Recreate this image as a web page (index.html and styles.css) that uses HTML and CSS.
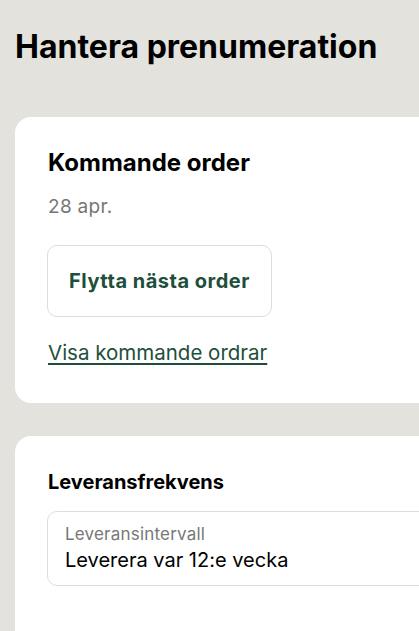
FILE: index.html
```html
<!DOCTYPE html>
<html lang="sv">
<head>
<meta charset="utf-8">
<title>Hantera prenumeration</title>
<link rel="stylesheet" href="styles.css">
</head>
<body>
<main class="page">
  <h1 class="page-title">Hantera prenumeration</h1>
  <section class="card">
    <h2 class="card-title">Kommande order</h2>
    <p class="date">28 apr.</p>
    <button class="btn-outline" type="button">Flytta nästa order</button>
    <a class="link" href="#">Visa kommande ordrar</a>
  </section>
  <section class="card card-freq">
    <h3 class="sub-title">Leveransfrekvens</h3>
    <div class="field">
      <span class="field-label">Leveransintervall</span>
      <span class="field-value">Leverera var 12:e vecka</span>
    </div>
  </section>
</main>
</body>
</html>
```

FILE: styles.css
```css
html, body {
  margin: 0;
  padding: 0;
  background: #e3e2dd;
  overflow: hidden;
}
body {
  font-family: Inter, "Noto Sans", sans-serif;
  color: #000;
}
.page {
  width: 560px;
  padding: 0 0 0 15px;
  display: flex;
  flex-direction: column;
}
.page-title {
  margin: 28px 0 0 0;
  font-size: 32px;
  font-weight: 700;
  line-height: 38px;
  letter-spacing: 0;
}
.card {
  margin-top: 51px;
  background: #fff;
  border-radius: 16px;
  padding: 31px 32px 37px 32px;
  display: flex;
  flex-direction: column;
  align-items: flex-start;
}
.card-title {
  margin: 0 0 0 1px;
  font-size: 24px;
  font-weight: 700;
  line-height: 30px;
}
.date {
  margin: 17px 0 0 1px;
  font-size: 19px;
  line-height: 24px;
  letter-spacing: 0.3px;
  color: #767676;
}
.btn-outline {
  margin-top: 26px;
  width: 225px;
  height: 72px;
  padding: 0;
  background: #fff;
  border: 1px solid #ddd;
  border-radius: 10px;
  font-family: inherit;
  font-size: 20px;
  font-weight: 700;
  letter-spacing: 0.5px;
  color: #1e4f3b;
}
.link {
  margin: 23px 0 0 1px;
  font-size: 20.5px;
  line-height: 26px;
  color: #1e4f3b;
  text-decoration: underline;
  text-underline-offset: 3px;
}
.card-freq {
  margin-top: 33px;
  padding-top: 33px;
  height: 220px;
}
.sub-title {
  margin: 0 0 0 1px;
  font-size: 20px;
  font-weight: 700;
  line-height: 26px;
}
.field {
  margin-top: 16px;
  align-self: stretch;
  border: 1px solid #ddd;
  border-radius: 10px;
  padding: 12px 17px 12px;
  display: flex;
  flex-direction: column;
}
.field-label {
  font-size: 17px;
  line-height: 21px;
  letter-spacing: 0.2px;
  color: #777;
}
.field-value {
  margin-top: 2px;
  font-size: 20px;
  line-height: 26px;
  color: #000;
}
```
